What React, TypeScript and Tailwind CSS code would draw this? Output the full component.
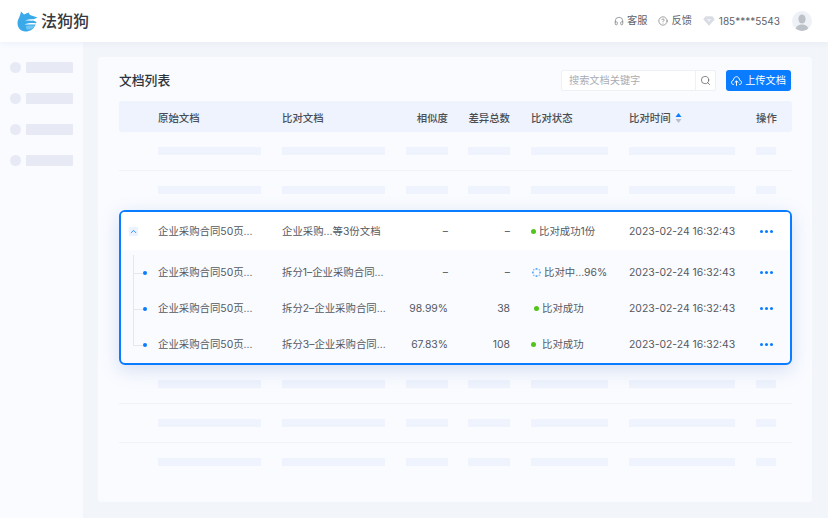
import { Headphones, CircleHelp, Search, ChevronUp } from "lucide-react";

const font = { fontFamily: 'Inter, "Noto Sans CJK SC", sans-serif' };
const cols = "grid grid-cols-[39px_124px_124px_62px_63px_98px_127px_36px] items-center";

function Logo() {
  return (
    <svg width="21" height="21" viewBox="0 0 21 21" className="shrink-0">
      <path d="M4 0.5 L7 3.5 L11.5 1.5 L13 4 L20.5 6.5 L15 9 L19.5 11 L18.5 13.5 C17 18 13 20.5 8.5 20.5 C3.5 20.5 0.5 16.5 0.5 12 C0.5 8.5 3 6 4 0.5 Z" fill="#3aa9ea" />
      <path d="M8 9.6 C11 8.4 14 8.2 17.5 8.4 L15 9.8 C12.5 9.7 10 9.7 8 9.6 Z" fill="#ffffff" />
      <path d="M7.5 13.4 C11 12 15 12 19 12.2 L18.6 13.6 C14.5 13.4 11 13.4 7.5 13.4 Z" fill="#ffffff" />
      <path d="M9 15 C12 14.4 15 14.4 17.6 14.6 C15.5 18 12.5 19.2 9.5 18.2 Z" fill="#73c6f3" />
    </svg>
  );
}

function Gem() {
  return (
    <svg width="12" height="10" viewBox="0 0 12 10">
      <path d="M2.7 0.3 H9.3 L11.8 3.2 L6 9.8 L0.2 3.2 Z" fill="#d9dde3" />
      <path d="M3.7 3 H8.3 L6 6 Z" fill="#eceff3" />
    </svg>
  );
}

function CloudUp() {
  return (
    <svg width="11" height="10" viewBox="0 0 11 10" fill="none" stroke="#fff" strokeWidth="1">
      <path d="M3 8.5 H2.6 C1.4 8.5 .5 7.6 .5 6.4 C.5 5.3 1.3 4.5 2.3 4.3 C2.6 2.2 3.9 .7 5.5 .7 C7.1 .7 8.4 2.2 8.7 4.3 C9.7 4.5 10.5 5.3 10.5 6.4 C10.5 7.6 9.6 8.5 8.4 8.5 H8" />
      <path d="M5.5 9.8 V5 M3.7 6.6 L5.5 4.8 L7.3 6.6" />
    </svg>
  );
}

function Avatar() {
  return (
    <div className="flex h-5 w-5 items-center justify-center overflow-hidden rounded-full bg-[#eef1f6]">
      <svg width="20" height="20" viewBox="0 0 20 20">
        <ellipse cx="10" cy="8" rx="3.6" ry="4.6" fill="#bcc1c8" />
        <path d="M3.5 18 C4.5 14.5 7.5 13.5 10 13.5 C12.5 13.5 15.5 14.5 16.5 18 L16 20 H4 Z" fill="#bcc1c8" />
      </svg>
    </div>
  );
}

function Bar({ className }: { className: string }) {
  return <div className={`h-2 bg-[#eef3fd] ${className}`} />;
}

function SkeletonRow({ line }: { line?: boolean }) {
  return (
    <div className={`${cols} h-[38px] ${line ? "box-content border-b border-[#eff3f8]" : ""}`}>
      <div />
      <Bar className="w-[103px]" />
      <Bar className="w-[103px]" />
      <Bar className="w-[42px]" />
      <Bar className="w-[42px]" />
      <Bar className="w-[77px]" />
      <Bar className="w-[106px]" />
      <Bar className="w-5" />
    </div>
  );
}

function Dots({ sub }: { sub?: boolean }) {
  return (
    <div className={`flex gap-[2px] pl-[4px] ${sub ? "mb-[2px]" : ""}`}>
      <span className="h-[3px] w-[3px] rounded-full bg-[#0a7cff]" />
      <span className="h-[3px] w-[3px] rounded-full bg-[#0a7cff]" />
      <span className="h-[3px] w-[3px] rounded-full bg-[#0a7cff]" />
    </div>
  );
}

function GreenDot() {
  return <span className="h-[5px] w-[5px] shrink-0 rounded-full bg-[#52c41a]" />;
}

function Spinner() {
  return (
    <svg width="9" height="9" viewBox="0 0 9 9" className="shrink-0">
      {[[3.6, 0, 1.8, 1.8], [0, 3.6, 1.8, 1.8], [7.2, 3.6, 1.8, 1.8], [3.6, 7.2, 1.8, 1.8]].map(([x, y, w, h], i) => (
        <rect key={i} x={x} y={y} width={w} height={h} fill="#5aa8ff" />
      ))}
      {[[1, 1], [6.6, 1], [1, 6.6], [6.6, 6.6]].map(([x, y], i) => (
        <rect key={i} x={x} y={y} width="1.5" height="1.5" fill="#8fc4ff" />
      ))}
    </svg>
  );
}

function Tree({ last }: { last?: boolean }) {
  return (
    <div className="relative h-full">
      <span className={`absolute left-[14px] top-0 w-px bg-[#e4e8ee] ${last ? "h-1/2" : "h-full"}`} />
      <span className="absolute left-[14px] top-1/2 h-px w-[10px] bg-[#e4e8ee]" />
      <span className="absolute left-[24px] top-1/2 h-1 w-1 -translate-y-[2px] rounded-full bg-[#0a7cff]" />
    </div>
  );
}

function SubRow({ second, sim, diff, status, last }: { second: string; sim: string; diff: string; status: React.ReactNode; last?: boolean }) {
  return (
    <div className={`${cols} h-9`}>
      <Tree last={last} />
      <div>企业采购合同50页...</div>
      <div>{second}</div>
      <div className="w-[42px] text-right">{sim}</div>
      <div className="w-[42px] text-right">{diff}</div>
      {status}
      <div>2023-02-24 16:32:43</div>
      <Dots sub />
    </div>
  );
}

export default function App() {
  return (
    <div className="flex h-[518px] w-[828px] flex-col overflow-hidden bg-[#f2f5f9]" style={font}>
      <header className="relative z-10 flex h-[42px] shrink-0 items-center justify-between bg-white pl-[17px] pr-[16px] shadow-[0_1px_6px_rgba(210,220,235,0.35)]">
        <div className="flex items-center gap-[3px]">
          <Logo />
          <span className="text-[16px] font-medium leading-none text-[#333a44]">法狗狗</span>
        </div>
        <div className="flex items-center text-[10.2px] text-[#5c6168]">
          <Headphones size={10} strokeWidth={1.4} className="mr-[3px]" />
          <span>客服</span>
          <CircleHelp size={10} strokeWidth={1.4} className="ml-[11px] mr-[3px]" />
          <span>反馈</span>
          <span className="ml-[11px] mr-[4px] flex"><Gem /></span>
          <span className="text-[10px]">185****5543</span>
          <span className="ml-[12px]"><Avatar /></span>
        </div>
      </header>
      <div className="flex min-h-0 flex-1">
        <aside className="flex w-[83px] shrink-0 flex-col gap-[20px] bg-[#f9fbff] pl-[10px] pt-[20px]">
          {[0, 1, 2, 3].map((i) => (
            <div key={i} className="flex items-center gap-[5px]">
              <span className="h-[11px] w-[11px] rounded-full bg-[#e7eaf5]" />
              <span className="h-[11px] w-[47px] rounded-[1px] bg-[#e7eaf5]" />
            </div>
          ))}
        </aside>
        <main className="min-w-0 flex-1 pb-4 pl-[15px] pr-4 pt-[15px]">
          <section className="h-[445px] rounded-[3px] bg-[#f9fbff] pl-[21px] pr-5 pt-[13px] text-[10.4px] text-[#55595f]">
            <div className="flex h-[21px] items-center justify-between">
              <h1 className="text-[12.8px] font-medium text-[#2f343b]">文档列表</h1>
              <div className="flex items-center gap-[10px] pr-px">
                <div className="flex h-[21px] w-[155px] items-center rounded-[2px] border border-[#edf0f5] bg-white">
                  <span className="flex-1 pl-[7px] text-[10.2px] text-[#a9adb3]">搜索文档关键字</span>
                  <span className="flex h-full w-[20px] items-center justify-center border-l border-[#edf0f5]">
                    <Search size={11} strokeWidth={1.5} className="text-[#555]" />
                  </span>
                </div>
                <button className="flex h-[21px] w-[65px] items-center justify-center gap-[3px] rounded-[3px] bg-[#0a7cff] text-[10.2px] text-white">
                  <CloudUp />
                  上传文档
                </button>
              </div>
            </div>
            <div className={`${cols} mt-[10px] h-[31px] rounded-[3px] bg-[#eef3fd] pt-[4px] font-medium text-[#4a4e54]`}>
              <div />
              <div>原始文档</div>
              <div>比对文档</div>
              <div className="w-[42px] text-right">相似度</div>
              <div className="w-[42px] whitespace-nowrap text-right">差异总数</div>
              <div>比对状态</div>
              <div className="flex items-center gap-[4px]">
                比对时间
                <svg width="7" height="10" viewBox="0 0 7 10">
                  <path d="M3.5 0 L6.5 4 H0.5 Z" fill="#0a7cff" />
                  <path d="M3.5 10 L6.5 6 H0.5 Z" fill="#b8c0cc" />
                </svg>
              </div>
              <div>操作</div>
            </div>
            <SkeletonRow line />
            <SkeletonRow />
            <div className="relative z-[1] mt-[1px] h-[155px] overflow-hidden rounded-[6px] border-2 border-[#0a7cff] bg-[#f9fbff] [&>*]:-ml-[2px]" style={{ boxShadow: "0 5px 18px rgba(110,140,205,0.25)" }}>
              <div className={`${cols} h-[38px] bg-white`}>
                <div className="pl-[10px]">
                  <span className="flex h-[9px] w-[9px] items-center justify-center rounded-[1px] bg-[#eaf3ff]">
                    <ChevronUp size={9} strokeWidth={2.2} className="text-[#0a7cff]" />
                  </span>
                </div>
                <div className="pt-[2px]">企业采购合同50页...</div>
                <div className="pt-[2px]">企业采购...等3份文档</div>
                <div className="w-[42px] pt-[2px] text-right">–</div>
                <div className="w-[42px] pt-[2px] text-right">–</div>
                <div className="flex items-center gap-[3px] pt-[2px]"><GreenDot />比对成功1份</div>
                <div className="pt-[2px]">2023-02-24 16:32:43</div>
                <Dots />
              </div>
              <div className="pt-[5px]">
                <SubRow second="拆分1–企业采购合同..." sim="–" diff="–" status={<div className="flex items-center gap-[3px] pl-px"><Spinner />比对中...96%</div>} />
                <SubRow second="拆分2–企业采购合同..." sim="98.99%" diff="38" status={<div className="flex items-center gap-[3px] pl-[3px]"><GreenDot />比对成功</div>} />
                <SubRow second="拆分3–企业采购合同..." sim="67.83%" diff="108" last status={<div className="flex items-center gap-[6px]"><GreenDot />比对成功</div>} />
              </div>
            </div>
            <SkeletonRow line />
            <SkeletonRow line />
            <SkeletonRow />
          </section>
        </main>
      </div>
    </div>
  );
}
